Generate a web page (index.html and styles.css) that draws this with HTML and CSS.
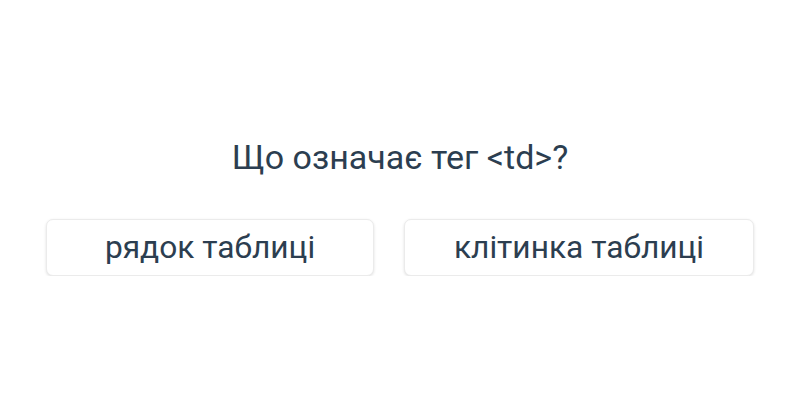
FILE: index.html
```html
<!DOCTYPE html>
<html>
<head>
    <title>Quiz</title>
    <meta name="viewport" content="width=device-width, initial-scale=1.0">
    <link rel="stylesheet" href="styles.css">
</head>
<body>
    <div class="quiz">
        <h2 class="question">Що означає тег &lt;td&gt;?</h2>
        <div class="answers">
            <button class="answer">рядок таблиці</button>
            <button class="answer">клітинка таблиці</button>
        </div>
    </div>
</body>
</html>
```

FILE: styles.css
```css
body {
    font-family: Roboto, "Liberation Sans", sans-serif;
    background-color: #ffffff;
    color: #2c3e50;
    margin: 0;
}
.quiz {
    padding-top: 137px;
}
.question {
    font-size: 34px;
    font-weight: 400;
    text-align: center;
    line-height: 40px;
    margin: 0 0 42px 0;
}
.answers {
    display: grid;
    grid-template-columns: 328px 350px;
    justify-content: center;
    gap: 30px;
}
.answer {
    font-family: inherit;
    font-size: 31.7px;
    color: #2c3e50;
    background-color: #ffffff;
    border: 1px solid #ebebeb;
    border-radius: 7px;
    height: 57px;
    padding: 0;
    box-shadow: 0 1px 3px rgba(0, 0, 0, 0.12);
    cursor: pointer;
}
```
